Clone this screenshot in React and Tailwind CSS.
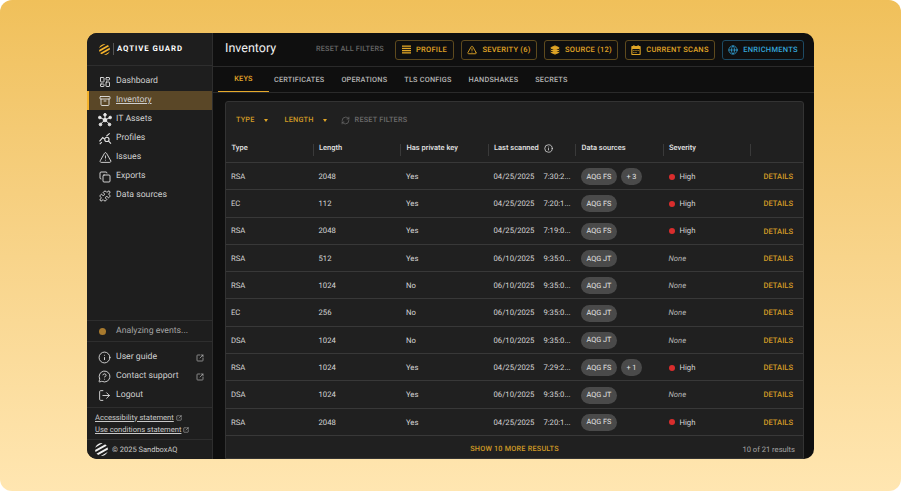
import React, { useId } from "react";
import {
  Archive, Copy, Globe, Info, Layers, LogOut, MessageCircleQuestion,
  Puzzle, RefreshCw, SquareArrowOutUpRight, TriangleAlert, LayoutDashboard,
} from "lucide-react";

function StripeLogo({ size = 14, color = "#f5b32c" }) {
  const id = useId();
  return (
    <svg width={size} height={size} viewBox="0 0 14 14" className="shrink-0">
      <clipPath id={id}>
        <circle cx="7" cy="7" r="7" />
      </clipPath>
      <g clipPath={`url(#${id})`} stroke={color} strokeWidth="2.1">
        <path d="M-2 5 8-1M-1 9.4 15 .4M1 13 16 4.6M5 16 16 9.6" />
      </g>
    </svg>
  );
}

function HubIcon() {
  return (
    <svg width={14} height={14} viewBox="0 0 14 14" fill="none" stroke="#e5e5e5" strokeWidth={1} className="shrink-0 -ml-[1px]">
      <circle cx="7" cy="7" r="1.8" fill="#e5e5e5" />
      <path d="M7 7 7 2M7 7 2 4.5M7 7 12 4.5M7 7 2.5 11M7 7 11.5 11" />
      <circle cx="7" cy="1.8" r="1.3" fill="#e5e5e5" />
      <circle cx="1.8" cy="4.5" r="1.3" fill="#e5e5e5" />
      <circle cx="12.2" cy="4.5" r="1.3" fill="#e5e5e5" />
      <circle cx="2.5" cy="11.5" r="1.3" fill="#e5e5e5" />
      <circle cx="11.5" cy="11.5" r="1.3" fill="#e5e5e5" />
    </svg>
  );
}

function ProfilesIcon() {
  return (
    <svg width={13} height={13} viewBox="0 0 14 14" fill="none" stroke="#e5e5e5" strokeWidth={1.2} className="shrink-0">
      <path d="M.5 10 4 6l2 1.6M8 4.5 11.5 1.5" />
      <circle cx="8.5" cy="8" r="2.3" />
      <path d="m10.3 9.8 2.6 2.8M.8 13 3 10.8" />
    </svg>
  );
}

function BarsIcon() {
  return (
    <svg width={9} height={9} viewBox="0 0 9 9" fill="currentColor" className="shrink-0">
      <rect y="0.5" width="9" height="1.3" />
      <rect y="2.8" width="9" height="1.3" />
      <rect y="5" width="9" height="1.3" />
      <rect y="7.2" width="9" height="1.3" />
    </svg>
  );
}

function CalendarIcon() {
  return (
    <svg width={10} height={10} viewBox="0 0 10 10" className="shrink-0">
      <path d="M2.4 0h1v1h3.2V0h1v1H9a.7.7 0 0 1 .7.7v7.6A.7.7 0 0 1 9 10H1a.7.7 0 0 1-.7-.7V1.700A.7.7 0 0 1 1 1h1.400Z" fill="currentColor" />
      <path d="M1.400 4h7.200v4.900H1.400Z" fill="#0f0f0f" />
      <path d="M2.400 5h1v1h-1ZM4.500 5h1v1h-1ZM6.600 5h1v1h-1ZM2.400 7h1v1h-1ZM4.500 7h1v1h-1Z" fill="currentColor" />
    </svg>
  );
}

function Caret() {
  return <span className="w-0 h-0 border-x-[2.5px] border-x-transparent border-t-[3px] border-t-[#e0a526]" />;
}

const navIcon = { size: 12, strokeWidth: 1.8 };
const nav = [
  { label: "Dashboard", icon: <LayoutDashboard {...navIcon} /> },
  { label: "Inventory", icon: <Archive {...navIcon} />, active: true },
  { label: "IT Assets", icon: <HubIcon /> },
  { label: "Profiles", icon: <ProfilesIcon /> },
  { label: "Issues", icon: <TriangleAlert size={13} strokeWidth={1.6} /> },
  { label: "Exports", icon: <Copy {...navIcon} /> },
  { label: "Data sources", icon: <Puzzle {...navIcon} /> },
];

const rows = [
  ["RSA", "2048", "Yes", "04/25/2025", "7:30:2...", "AQG FS", "+ 3", true],
  ["EC", "112", "Yes", "04/25/2025", "7:20:1...", "AQG FS", null, true],
  ["RSA", "2048", "Yes", "04/25/2025", "7:19:0...", "AQG FS", null, true],
  ["RSA", "512", "Yes", "06/10/2025", "9:35:0...", "AQG JT", null, false],
  ["RSA", "1024", "No", "06/10/2025", "9:35:0...", "AQG JT", null, false],
  ["EC", "256", "No", "06/10/2025", "9:35:0...", "AQG JT", null, false],
  ["DSA", "1024", "No", "06/10/2025", "9:35:0...", "AQG JT", null, false],
  ["RSA", "1024", "Yes", "04/25/2025", "7:29:2...", "AQG FS", "+ 1", true],
  ["DSA", "1024", "Yes", "06/10/2025", "9:35:0...", "AQG JT", null, false],
  ["RSA", "2048", "Yes", "04/25/2025", "7:20:1...", "AQG FS", null, true],
];

const tabs = ["CERTIFICATES", "OPERATIONS", "TLS CONFIGS", "HANDSHAKES", "SECRETS"];
const gridCols = "grid grid-cols-[87.5px_87.5px_87.5px_87.5px_87.5px_87.5px_1fr]";

function FilterButton({ icon, label, blue = false, className = "" }) {
  return (
    <div
      className={
        "h-[20px] shrink-0 flex items-center justify-center gap-[5px] rounded-[3px] border text-[7.5px] font-medium tracking-[0.25px] whitespace-nowrap " +
        (blue ? "border-[#1d4a63] text-[#35a7dc] " : "border-[#5e4a1e] text-[#e0a526] ") +
        className
      }
    >
      {icon}
      <span>{label}</span>
    </div>
  );
}

function HeaderCell({ children, last = false }) {
  return (
    <div className="relative flex items-center pl-[5.5px] pb-[2px] text-[#e3e3e3] text-[7.5px] font-medium">
      {children}
      {!last && <span className="absolute right-0 top-[8px] h-[12px] w-px bg-[#3a3a3a]" />}
    </div>
  );
}

function Pill({ children }) {
  return (
    <span className="h-[17px] flex items-center px-[5.5px] pt-[1px] rounded-full bg-[#4a4a4a] text-[#e3e3e3] text-[7.3px]">
      {children}
    </span>
  );
}

export default function App() {
  return (
    <div className="w-[901px] h-[491px] rounded-[12px] bg-gradient-to-b from-[#f0c05a] to-[#ffe6b1] pt-[33px] pl-[87px] font-['Roboto',sans-serif] [text-rendering:geometricPrecision] overflow-hidden">
      <div className="w-[727px] h-[426px] rounded-[10px] bg-[#0f0f0f] flex overflow-hidden">
        <aside className="w-[126px] shrink-0 bg-[#1e1e1e] border-r border-[#2e2e2e] flex flex-col text-[#cfcfcf] text-[8.7px]">
          <div className="h-[33px] shrink-0 flex items-center pl-[12px] border-b border-[#2e2e2e]">
            <StripeLogo size={11} />
            <span className="ml-[3px] mr-[3px] w-px h-[12px] bg-[#555]" />
            <span className="text-white text-[7.8px] font-bold tracking-[0.95px] whitespace-nowrap">AQTIVE GUARD</span>
          </div>
          <nav className="pt-[6px] flex flex-col">
            {nav.map((item) => (
              <div
                key={item.label}
                className={
                  "h-[19px] flex items-center pl-[10px] border-l-2 " +
                  (item.active ? "bg-[#5a4727] border-[#f5b32c] underline" : "border-transparent")
                }
              >
                <span className="w-[17px] flex justify-start text-[#e5e5e5]">{item.icon}</span>
                <span>{item.label}</span>
              </div>
            ))}
          </nav>
          <div className="mt-auto h-[22px] shrink-0 flex items-center pl-[12px] pt-[1px] border-t border-b border-[#2e2e2e] text-[#a3a3a3]">
            <span className="w-[7px] h-[7px] rounded-full bg-[#a87a2e]" />
            <span className="ml-[10px]">Analyzing events...</span>
          </div>
          <div className="pt-[6px] pb-[2px] flex flex-col">
            {[
              ["User guide", <Info key="i" size={13} strokeWidth={1.6} />, true],
              ["Contact support", <MessageCircleQuestion key="c" size={13} strokeWidth={1.6} />, true],
              ["Logout", <LogOut key="l" size={13} strokeWidth={1.6} />, false],
            ].map(([label, icon, ext]) => (
              <div key={label} className="h-[19px] flex items-center pl-[11px] pr-[8px]">
                <span className="w-[18px] text-[#e5e5e5]">{icon}</span>
                <span className="flex-1">{label}</span>
                {ext && <SquareArrowOutUpRight size={8} className="text-[#bbb]" />}
              </div>
            ))}
          </div>
          <div className="h-[32px] shrink-0 border-t border-[#2e2e2e] pl-[8px] pt-[3.5px] text-[7.6px] leading-[12.5px] text-[#c9c9c9]">
            <div className="flex items-center gap-[2px]"><span className="underline">Accessibility statement</span><SquareArrowOutUpRight size={6} /></div>
            <div className="flex items-center gap-[2px]"><span className="underline">Use conditions statement</span><SquareArrowOutUpRight size={6} /></div>
          </div>
          <div className="h-[20px] shrink-0 border-t border-[#2e2e2e] flex items-center pl-[8px] gap-[4px] text-[7.5px] text-[#c9c9c9]">
            <StripeLogo size={13} color="#f0f0f0" />
            <span className="pt-[1px]">© 2025 SandboxAQ</span>
          </div>
        </aside>

        <main className="flex-1 min-w-0 flex flex-col">
          <header className="h-[34px] shrink-0 flex items-center border-b border-[#2a2a2a] pl-[12px] pr-[10px]">
            <h1 className="text-[12.5px] text-[#f0f0f0] font-normal">Inventory</h1>
            <div className="ml-auto flex items-center gap-[7px]">
              <span className="mr-[4px] text-[7.3px] font-medium tracking-[0.2px] text-[#666] whitespace-nowrap">RESET ALL FILTERS</span>
              <FilterButton className="w-[59px]" icon={<BarsIcon />} label="PROFILE" />
              <FilterButton className="w-[76px]" icon={<TriangleAlert size={10} strokeWidth={2.2} />} label="SEVERITY (6)" />
              <FilterButton className="w-[74px]" icon={<Layers size={10} fill="currentColor" />} label="SOURCE (12)" />
              <FilterButton className="w-[90px]" icon={<CalendarIcon />} label="CURRENT SCANS" />
              <FilterButton className="w-[82px]" icon={<Globe size={10} strokeWidth={1.8} />} label="ENRICHMENTS" blue />
            </div>
          </header>

          <div className="h-[26px] shrink-0 flex border-b border-[#2a2a2a] pl-[5px] text-[7.3px] font-medium tracking-[0.2px] whitespace-nowrap">
            <div className="w-[51px] flex items-center justify-center pt-[1px] text-[#e6a92b] border-b border-[#e6a92b]">KEYS</div>
            <div className="flex items-center gap-[17px] pl-[5px] pt-[1px] text-[#b5b5b5]">
              {tabs.map((t) => (
                <span key={t}>{t}</span>
              ))}
            </div>
          </div>

          <section className="mt-[8px] ml-[12px] mr-[10px] flex-1 min-h-0 rounded-t-[3px] border border-[#333] bg-[#202020] flex flex-col overflow-hidden">
            <div className="h-[34px] shrink-0 flex items-center pl-[10px] pt-[2px] text-[7.3px] font-medium tracking-[0.2px] whitespace-nowrap">
              <span className="text-[#d19b26] flex items-center gap-[9px]">
                TYPE <Caret />
              </span>
              <span className="ml-[17px] text-[#d19b26] flex items-center gap-[9px]">
                LENGTH <Caret />
              </span>
              <span className="ml-[14px] text-[#6b6b6b] flex items-center gap-[5px]">
                <RefreshCw size={9} /> RESET FILTERS
              </span>
            </div>
            <div className={gridCols + " h-[27px] shrink-0 border-b border-[#383838]"}>
              <HeaderCell>Type</HeaderCell>
              <HeaderCell>Length</HeaderCell>
              <HeaderCell>Has private key</HeaderCell>
              <HeaderCell>
                Last scanned <Info size={9} className="ml-[5px]" />
              </HeaderCell>
              <HeaderCell>Data sources</HeaderCell>
              <HeaderCell>Severity</HeaderCell>
              <HeaderCell last />
            </div>
            {rows.map((r, i) => (
              <div key={i} className={gridCols + " h-[27.3px] shrink-0 border-b border-[#383838] pt-[1px] text-[7.7px] text-[#d6d6d6]"}>
                <div className="flex items-center pl-[5px]">{r[0]}</div>
                <div className="flex items-center pl-[5px]">{r[1]}</div>
                <div className="flex items-center pl-[5px]">{r[2]}</div>
                <div className="flex items-center pl-[5px] gap-[9px] whitespace-nowrap">
                  <span>{r[3]}</span>
                  <span>{r[4]}</span>
                </div>
                <div className="flex items-center pl-[5px] gap-[4px]">
                  <Pill>{r[5]}</Pill>
                  {r[6] && <Pill>{r[6]}</Pill>}
                </div>
                <div className="flex items-center pl-[5px]">
                  {r[7] ? (
                    <>
                      <span className="w-[6px] h-[6px] rounded-full bg-[#d92d2d] mr-[5px]" />
                      <span>High</span>
                    </>
                  ) : (
                    <span className="italic text-[#b5b5b5]">None</span>
                  )}
                </div>
                <div className="flex items-center justify-end pr-[10px] text-[7.6px] font-medium text-[#d19b26]">
                  DETAILS
                </div>
              </div>
            ))}
            <div className="relative flex-1 flex items-center justify-center pt-[5px] text-[7.3px] font-medium tracking-[0.2px] text-[#d19b26]">
              SHOW 10 MORE RESULTS
              <span className="absolute right-[8px] font-normal tracking-normal text-[7.6px] text-[#a3a3a3]">10 of 21 results</span>
            </div>
          </section>
        </main>
      </div>
    </div>
  );
}
